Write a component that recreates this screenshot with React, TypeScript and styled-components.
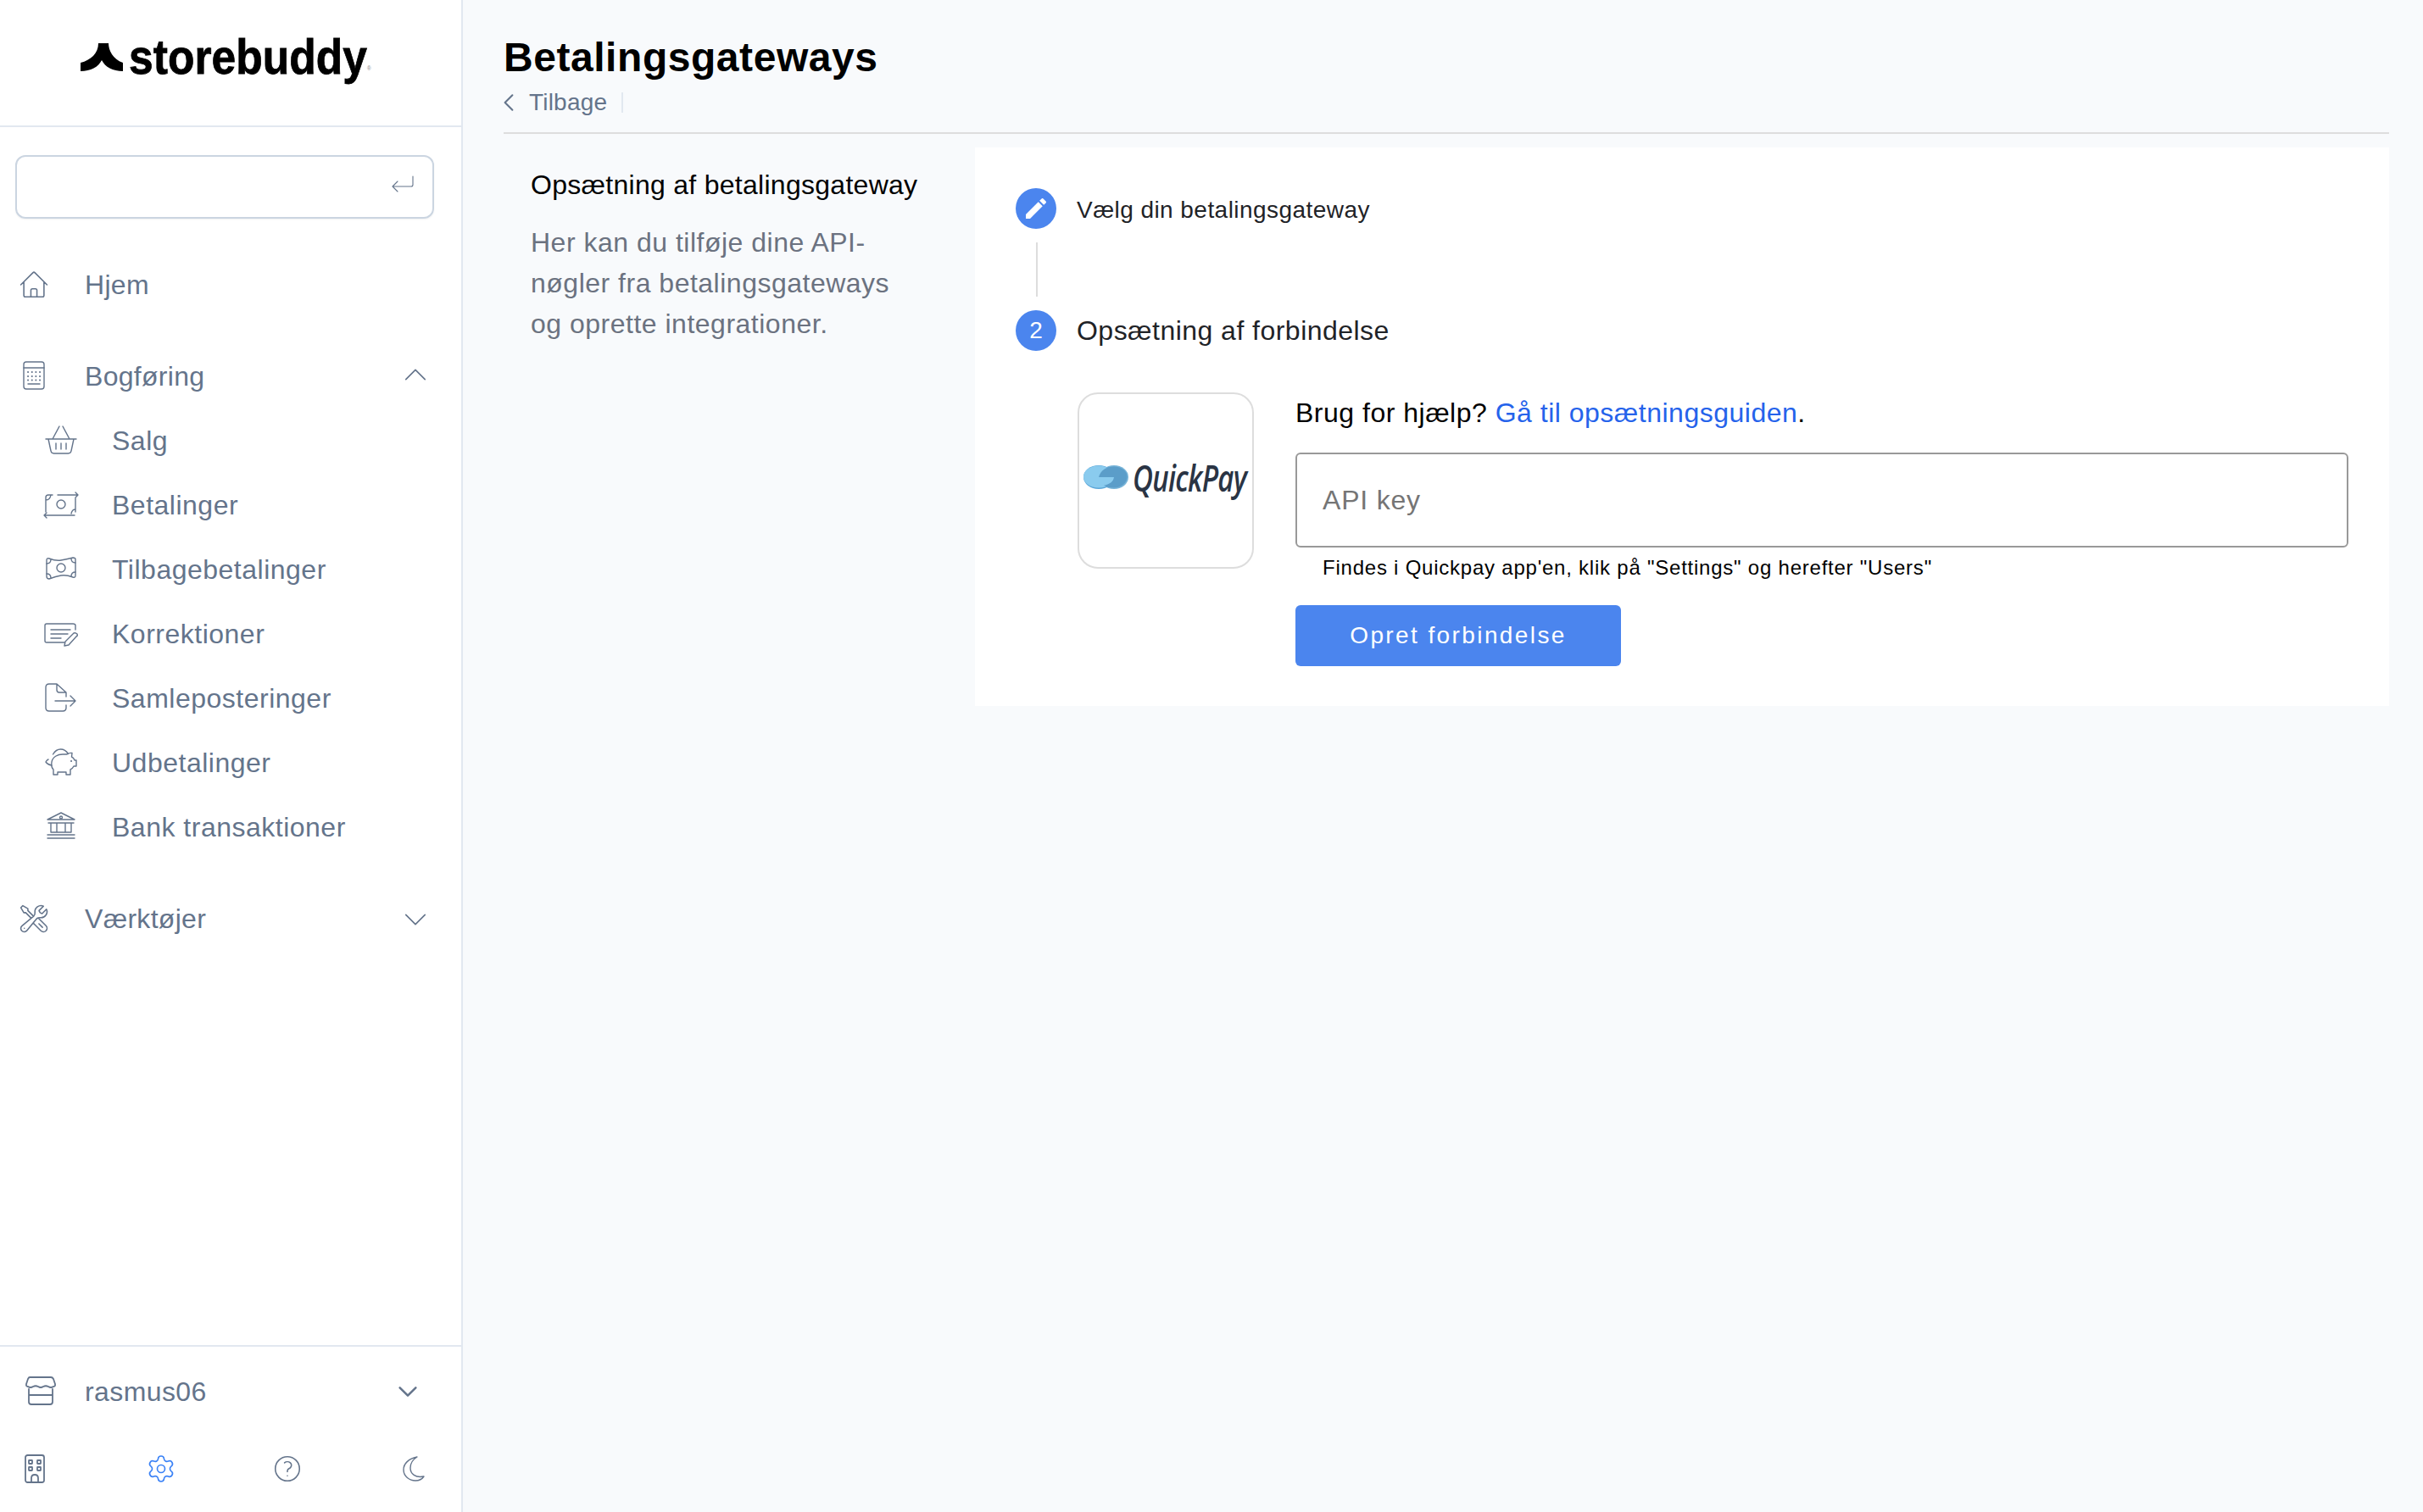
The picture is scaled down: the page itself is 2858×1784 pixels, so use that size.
import React from 'react';
import styled, { createGlobalStyle } from 'styled-components';
import {
    HiOutlineChevronDown,
    HiOutlineChevronLeft,
    HiOutlineChevronUp,
    HiOutlineHome,
    HiOutlineQuestionMarkCircle,
    HiOutlineWrenchScrewdriver,
} from 'react-icons/hi2';
import { Settings } from 'lucide-react';

const GlobalStyle = createGlobalStyle`
    html, body {
        margin: 0;
        padding: 0;
        background: #f8fafc;
    }
    body {
        font-family: 'Liberation Sans', Arial, sans-serif;
        letter-spacing: 0.3px;
    }
    * {
        box-sizing: border-box;
    }
`;

const Page = styled.div`
    display: flex;
    width: 2858px;
    height: 1784px;
    overflow: hidden;
    background: #f8fafc;
`;

const Sidebar = styled.aside`
    display: flex;
    flex-direction: column;
    flex: 0 0 546px;
    background: #fff;
    border-right: 2px solid #e2e8f0;
`;

const LogoBar = styled.div`
    display: flex;
    align-items: center;
    gap: 7px;
    height: 150px;
    padding: 0 0 14px 95px;
    border-bottom: 2px solid #e2e8f0;
`;

const LogoWord = styled.span`
    position: relative;
    display: inline-block;
    font-size: 58px;
    font-weight: 700;
    line-height: 1;
    letter-spacing: 0;
    color: #000;
    -webkit-text-stroke: 0.8px #000;
    transform: scaleX(0.89);
    transform-origin: left center;
    white-space: nowrap;

    sup {
        position: absolute;
        right: -5px;
        bottom: 12px;
        font-size: 7px;
        font-weight: 400;
        line-height: 1;
        color: #888;
        -webkit-text-stroke: 0;
    }
`;

const SearchBox = styled.div`
    display: flex;
    align-items: center;
    width: 494px;
    height: 75px;
    margin: 33px 0 40px 18px;
    padding: 0 22px 8px 20px;
    border: 2px solid #cbd5e1;
    border-radius: 12px;
    box-shadow: 0 1px 2px rgba(15, 23, 42, 0.06);
    color: #64748b;
`;

const SearchInput = styled.input`
    flex: 1;
    min-width: 0;
    border: 0;
    outline: 0;
    background: transparent;
    font: inherit;
`;

const NavGroup = styled.nav`
    display: flex;
    flex-direction: column;
    margin-bottom: 32px;
`;

const NavRow = styled.a<{ $sub?: boolean }>`
    display: flex;
    align-items: center;
    height: 76px;
    padding-left: ${(p) => (p.$sub ? 54 : 22)}px;
    padding-right: 36px;
    font-size: 32px;
    color: #64748b;
    letter-spacing: ${(p) => (p.$sub ? 0.5 : 0.3)}px;
`;

const IconSlot = styled.span`
    display: inline-flex;
    flex: 0 0 auto;
    align-items: center;
    justify-content: center;
    width: 36px;
    height: 36px;
    margin-right: 42px;
    color: #64748b;

    svg {
        display: block;
        flex: 0 0 auto;
        overflow: visible;
    }
`;

const NavLabel = styled.span`
    flex: 1;
`;

const Caret = styled.span<{ $up?: boolean }>`
    display: inline-flex;
    margin: ${(p) => (p.$up ? '0 0 4px' : '2px 0 0')};
`;

const Footer = styled.div`
    margin-top: auto;
    height: 197px;
    border-top: 2px solid #e2e8f0;
`;

const StoreRow = styled.div`
    display: flex;
    align-items: center;
    height: 106px;
    padding: 0 48px 0 30px;
    font-size: 32px;
    color: #64748b;
    letter-spacing: 0.4px;

    ${IconSlot} {
        margin-right: 34px;
    }
`;

const ToolRow = styled.div`
    display: flex;
    align-items: center;
    justify-content: space-between;
    height: 38px;
    margin-top: 19px;
    padding: 0 38px 0 23px;
`;

const ToolIcon = styled.span<{ $active?: boolean }>`
    display: inline-flex;
    justify-content: center;
    width: 36px;
    color: ${(p) => (p.$active ? '#3b82f6' : '#64748b')};

    svg {
        flex: 0 0 auto;
    }
`;

const Main = styled.main`
    flex: 1;
    min-width: 0;
    padding: 0 40px 0 48px;
`;

const PageHeader = styled.header`
    height: 158px;
    padding-top: 40px;
    border-bottom: 2px solid #ddd;
`;

const Title = styled.h1`
    margin: 0;
    font-size: 48px;
    font-weight: 700;
    line-height: 56px;
    color: #000;
    letter-spacing: 0.55px;
`;

const BackRow = styled.div`
    display: flex;
    align-items: center;
    height: 24px;
    margin-top: 13px;
    font-size: 28px;
    color: #64748b;
    letter-spacing: 0.2px;

    svg {
        margin: 0 10px 0 -8px;
    }
`;

const BackDivider = styled.span`
    width: 2px;
    height: 24px;
    margin-left: 17px;
    background: #e2e8f0;
`;

const Columns = styled.div`
    display: flex;
    margin-top: 16px;
`;

const IntroCol = styled.section`
    flex: 0 0 556px;
    min-width: 0;
    padding: 26px 70px 0 32px;
`;

const IntroTitle = styled.h2`
    margin: 0 0 26px;
    font-size: 32px;
    font-weight: 400;
    line-height: 36px;
    color: #000;
    letter-spacing: 0.28px;
    white-space: nowrap;
`;

const IntroText = styled.p`
    margin: 0;
    font-size: 32px;
    line-height: 48px;
    color: #6b7280;
    letter-spacing: 0.5px;
`;

const Panel = styled.section`
    flex: 1;
    height: 659px;
    padding: 48px;
    background: #fff;
`;

const StepRow = styled.div`
    display: flex;
    align-items: center;
    gap: 24px;
`;

const StepDot = styled.span`
    display: flex;
    align-items: center;
    justify-content: center;
    width: 48px;
    height: 48px;
    border-radius: 50%;
    background: #4b85ee;
    color: #fff;
    font-size: 28px;
    letter-spacing: 0;
`;

const StepLabel = styled.span<{ $large?: boolean }>`
    padding-top: ${(p) => (p.$large ? 0 : 3)}px;
    font-size: ${(p) => (p.$large ? 32 : 28)}px;
    color: #1f2327;
    letter-spacing: ${(p) => (p.$large ? 0.47 : 0.45)}px;
`;

const StepLine = styled.div`
    width: 2px;
    height: 64px;
    margin: 16px 0 16px 24px;
    background: #ddd;
`;

const StepBody = styled.div`
    display: flex;
    gap: 49px;
    margin: 49px 0 0 73px;
`;

const LogoCard = styled.div`
    display: flex;
    align-items: center;
    flex: 0 0 208px;
    gap: 5px;
    height: 208px;
    padding: 0 0 8px 5px;
    border: 2px solid #ddd;
    border-radius: 24px;
    overflow: hidden;

    svg {
        flex: 0 0 auto;
    }
`;

const QuickPayWord = styled.span`
    display: inline-block;
    font-family: 'Open Sans', sans-serif;
    font-size: 44px;
    font-style: italic;
    font-weight: 600;
    line-height: 1;
    letter-spacing: -1px;
    color: #2a3444;
    transform: scaleX(0.75);
    transform-origin: left center;
    white-space: nowrap;
`;

const Form = styled.div`
    flex: 1;
    min-width: 0;
`;

const HelpText = styled.p`
    margin: 0;
    font-size: 32px;
    line-height: 48px;
    color: #000;
    letter-spacing: 0.5px;

    a {
        color: #2563eb;
        text-decoration: none;
    }
`;

const KeyInput = styled.input`
    display: block;
    width: 100%;
    height: 112px;
    margin-top: 23px;
    padding: 0 30px;
    border: 2px solid #999;
    border-radius: 6px;
    background: #fff;
    outline: 0;
    font-family: inherit;
    font-size: 32px;
    letter-spacing: 0.8px;

    &::placeholder {
        color: #757575;
        opacity: 1;
    }
`;

const Hint = styled.p`
    margin: 8px 0 0 32px;
    font-size: 24px;
    line-height: 32px;
    color: #000;
    letter-spacing: 0.77px;
`;

const SubmitButton = styled.button`
    display: block;
    width: 384px;
    height: 72px;
    margin-top: 28px;
    border: 0;
    border-radius: 6px;
    background: #4b85ee;
    color: #fff;
    font-family: inherit;
    font-size: 28px;
    letter-spacing: 2.4px;
`;

const stroke = {
    fill: 'none',
    stroke: 'currentColor',
    strokeWidth: 1.4,
    strokeLinecap: 'round' as const,
    strokeLinejoin: 'round' as const,
};

const ReturnIcon = () => (
    <svg width="26" height="20" viewBox="0 0 26 20" {...stroke} strokeWidth={1.1}>
        <path d="M25 1v10q0 2-2 2H1M7 7l-6 6 6 6" />
    </svg>
);

const BrandMark = () => (
    <svg width="50" height="33" viewBox="0 0 50 33" fill="#000">
        <path d="M21 0h12c0 8 5 19 17 23v10c-12 0-21-5-25-13-4 8-13 13-25 13V23c12-3 21-11 21-23z" />
    </svg>
);

const CalculatorIcon = () => (
    <svg width="36" height="36" viewBox="0 0 36 36" {...stroke}>
        <rect x="6" y="1" width="24" height="32" rx="3" />
        <path d="M6 8h24M11 27h14" />
        <path d="M11 13h.1M15.700 13h.1M20.300 13h.1M25 13h.1M11 18h.1M15.700 18h.1M20.300 18h.1M25 18h.1M11 22.500h.1M15.700 22.500h.1M20.300 22.500h.1M25 22.500h.1" strokeWidth={2} />
    </svg>
);

const BasketIcon = () => (
    <svg width="36" height="36" viewBox="0 0 36 36" {...stroke}>
        <path d="M0 16h36M3 16l3 14q.5 3 3.500 3h17q3 0 3.500-3l3-14M8 16l8-15M28 16L20 1M12 21v7M18 21v7M24 21v7" />
    </svg>
);

const TransferIcon = () => (
    <svg width="36" height="36" viewBox="0 0 36 36" {...stroke}>
        <path d="M14 6h24M35 3l3 3-3 3M34 30H-2M1 27l-3 3 3 3" />
        <path d="M0 26V9q0-3 3-3h5M35 10v16M0 12q5 0 6-6M35 23q-4 0-5 5" />
        <circle cx="18" cy="17" r="5" />
    </svg>
);

const CashIcon = () => (
    <svg width="36" height="36" viewBox="0 0 36 36" {...stroke}>
        <path d="M1 7q0-3 3-2 8 3 14 2t14-3q3 0 3 2v19q0 3-3 2-8-3-14-2T4 29q-3 0-3-3z" />
        <path d="M1 11q5 0 5-5M35 10q-5 0-5-5M1 23q5 0 5 5M35 21q-5 0-5 5" />
        <circle cx="18" cy="16" r="5" />
    </svg>
);

const CorrectionIcon = () => (
    <svg width="36" height="36" viewBox="0 0 36 36" {...stroke}>
        <path d="M22 28H1q-2 0-2-2V8q0-2 2-2h31q3 0 3 2v5M6 13h23M6 18h20M6 23h12" />
        <path d="M22 32l1-5 10-10q2-1 4 1 1 2-1 3L27 31z" />
    </svg>
);

const PostingIcon = () => (
    <svg width="36" height="36" viewBox="0 0 36 36" {...stroke}>
        <path d="M24 26v3q0 4-4 4H4q-4 0-4-4V5q0-4 4-4h9l11 10v5M13 1v7q0 3 3 3h8M11 21h24M29 15l6 6-6 6" />
    </svg>
);

const PiggyIcon = () => (
    <svg width="36" height="36" viewBox="0 0 36 36" {...stroke}>
        <path d="M8.500 8Q12 2 17.500 2T26.500 7.500" />
        <path d="M7 17c1-6 7-9 13-9h5q3-2 6-1.500l-.5 4.500q2.500 1 3.500 4h2v7h-3q-1.500 3-4 4v6h-5v-3H14v3H9v-6q-3-3-2-9z" />
        <path d="M7 21q-5-1-7-4 1-2 3-3" />
        <path d="M30 16h.1" strokeWidth={2} />
    </svg>
);

const BankIcon = () => (
    <svg width="36" height="36" viewBox="0 0 36 36" {...stroke}>
        <path d="M2 9l16-8 16 8zM3 13h30M6 24V13M30 24V13M13 24V13M23 24V13M6 24h24M2 27h32M2 31h32" />
        <circle cx="18" cy="6.500" r="1.500" />
    </svg>
);

const StoreIcon = () => (
    <svg width="36" height="36" viewBox="0 0 36 36" {...stroke} strokeWidth={1.8}>
        <path d="M5 1h25q2 0 3 2l2 6q.5 3-2 3-3 2-6 0-3-1.500-6 0-3 2-6 0-3-1.500-6 0-3 2-6 0-2.500 0-2-3l2-6q1-2 2-2z" />
        <path d="M4 15v15q0 3 3 3h22q3 0 3-3V15M4 22h28" />
    </svg>
);

const BuildingIcon = () => (
    <svg width="24" height="34" viewBox="0 0 24 34" {...stroke} strokeWidth={1.8}>
        <rect x="1" y="1" width="22" height="32" rx="2.500" />
        <rect x="5" y="7" width="4" height="4" rx="0.5" />
        <rect x="15" y="7" width="4" height="4" rx="0.5" />
        <rect x="5" y="15" width="4" height="4" rx="0.5" />
        <rect x="15" y="15" width="4" height="4" rx="0.5" />
        <path d="M8 33v-5q0-4 4-4t4 4v5" />
    </svg>
);

const MoonIcon = () => (
    <svg width="26" height="30" viewBox="0 0 26 30" {...stroke}>
        <path d="M17 1C7 3 1 9 1 16c0 8 7 13 14 13 4 0 8-2 10-5C15 26 9 21 9 14 9 9 12 4 17 1z" />
    </svg>
);

const QuickPayMark = () => (
    <svg width="53" height="28" viewBox="0 0 53 28">
        <ellipse cx="36" cy="14" rx="17" ry="14" fill="#78b4d8" />
        <ellipse cx="18" cy="14" rx="18" ry="14" fill="#5ba7d9" />
        <ellipse cx="18" cy="13.500" rx="18" ry="13" fill="#8acbee" />
        <path d="M18 14c2-8 9-12.500 18-12.500 9 0 15.500 5 15.500 12 0 7-7 13-15.500 13-5 0-9-1-12-3 6-.5 12-4.500 12-9.500z" fill="#5b9dc9" />
    </svg>
);

const subItems = [
    { label: 'Salg', icon: <BasketIcon /> },
    { label: 'Betalinger', icon: <TransferIcon /> },
    { label: 'Tilbagebetalinger', icon: <CashIcon /> },
    { label: 'Korrektioner', icon: <CorrectionIcon /> },
    { label: 'Samleposteringer', icon: <PostingIcon /> },
    { label: 'Udbetalinger', icon: <PiggyIcon /> },
    { label: 'Bank transaktioner', icon: <BankIcon /> },
];

const App = () => {
    return (
        <Page>
            <GlobalStyle />
            <Sidebar>
                <LogoBar>
                    <BrandMark />
                    <LogoWord>
                        storebuddy<sup>®</sup>
                    </LogoWord>
                </LogoBar>
                <SearchBox>
                    <SearchInput aria-label="Søg" />
                    <ReturnIcon />
                </SearchBox>

                <NavGroup>
                    <NavRow>
                        <IconSlot>
                            <HiOutlineHome size={38} strokeWidth={1} />
                        </IconSlot>
                        <NavLabel>Hjem</NavLabel>
                    </NavRow>
                </NavGroup>

                <NavGroup>
                    <NavRow>
                        <IconSlot>
                            <CalculatorIcon />
                        </IconSlot>
                        <NavLabel>Bogføring</NavLabel>
                        <Caret $up>
                            <HiOutlineChevronUp size={36} strokeWidth={1.1} />
                        </Caret>
                    </NavRow>
                    {subItems.map((item) => (
                        <NavRow $sub key={item.label}>
                            <IconSlot>{item.icon}</IconSlot>
                            <NavLabel>{item.label}</NavLabel>
                        </NavRow>
                    ))}
                </NavGroup>

                <NavGroup>
                    <NavRow>
                        <IconSlot>
                            <HiOutlineWrenchScrewdriver size={38} strokeWidth={1} />
                        </IconSlot>
                        <NavLabel>Værktøjer</NavLabel>
                        <Caret>
                            <HiOutlineChevronDown size={36} strokeWidth={1.1} />
                        </Caret>
                    </NavRow>
                </NavGroup>

                <Footer>
                    <StoreRow>
                        <IconSlot>
                            <StoreIcon />
                        </IconSlot>
                        <NavLabel>rasmus06</NavLabel>
                        <HiOutlineChevronDown size={30} strokeWidth={2} />
                    </StoreRow>
                    <ToolRow>
                        <ToolIcon>
                            <BuildingIcon />
                        </ToolIcon>
                        <ToolIcon $active>
                            <Settings size={36} strokeWidth={1.1} />
                        </ToolIcon>
                        <ToolIcon>
                            <HiOutlineQuestionMarkCircle size={38} strokeWidth={1} />
                        </ToolIcon>
                        <ToolIcon>
                            <MoonIcon />
                        </ToolIcon>
                    </ToolRow>
                </Footer>
            </Sidebar>

            <Main>
                <PageHeader>
                    <Title>Betalingsgateways</Title>
                    <BackRow>
                        <HiOutlineChevronLeft size={28} strokeWidth={1.8} />
                        Tilbage
                        <BackDivider />
                    </BackRow>
                </PageHeader>

                <Columns>
                    <IntroCol>
                        <IntroTitle>Opsætning af betalingsgateway</IntroTitle>
                        <IntroText>Her kan du tilføje dine API-nøgler fra betalingsgateways og oprette integrationer.</IntroText>
                    </IntroCol>

                    <Panel>
                        <StepRow>
                            <StepDot>
                                <svg width="32" height="32" viewBox="0 0 24 24" fill="#fff">
                                    <path d="M3 17.25V21h3.750L17.810 9.940l-3.750-3.750L3 17.250zM20.710 7.040c.39-.39.39-1.020 0-1.410l-2.340-2.340c-.39-.39-1.020-.39-1.410 0l-1.830 1.830 3.750 3.750 1.830-1.830z" />
                                </svg>
                            </StepDot>
                            <StepLabel>Vælg din betalingsgateway</StepLabel>
                        </StepRow>
                        <StepLine />
                        <StepRow>
                            <StepDot>2</StepDot>
                            <StepLabel $large>Opsætning af forbindelse</StepLabel>
                        </StepRow>

                        <StepBody>
                            <LogoCard>
                                <QuickPayMark />
                                <QuickPayWord>QuickPay</QuickPayWord>
                            </LogoCard>
                            <Form>
                                <HelpText>
                                    Brug for hjælp? <a href="#guide">Gå til opsætningsguiden</a>.
                                </HelpText>
                                <KeyInput placeholder="API key" />
                                <Hint>Findes i Quickpay app'en, klik på "Settings" og herefter "Users"</Hint>
                                <SubmitButton>Opret forbindelse</SubmitButton>
                            </Form>
                        </StepBody>
                    </Panel>
                </Columns>
            </Main>
        </Page>
    );
};

export default App;
